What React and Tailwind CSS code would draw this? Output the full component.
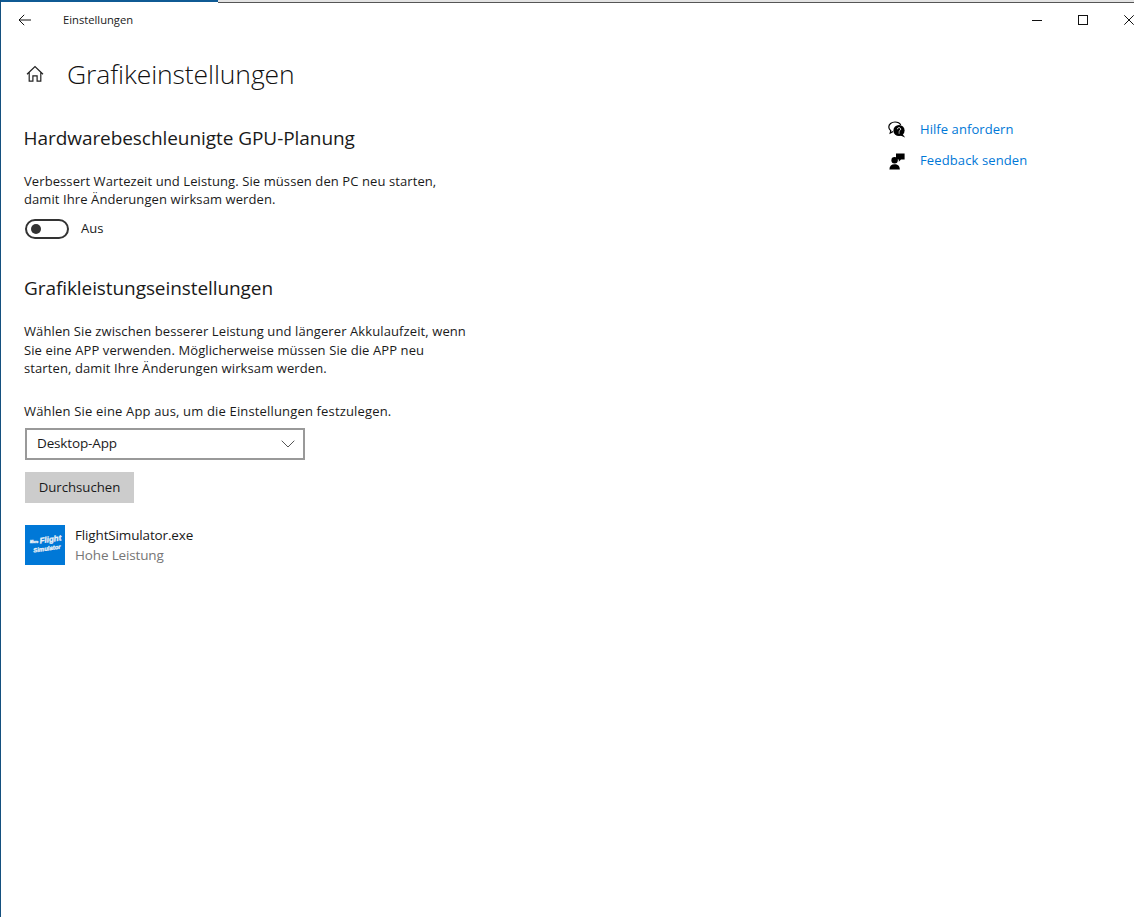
import React from "react";

function Back() {
  return (
    <svg width="14" height="12" viewBox="0 0 14 12" fill="none" stroke="#111" strokeWidth="1">
      <path d="M13 6H1M6.2 .8L1 6l5.2 5.2" />
    </svg>
  );
}

function Home() {
  return (
    <svg width="18" height="18" viewBox="0 0 18 18" fill="none" stroke="#222" strokeWidth="1.2">
      <path d="M1 9.2L9 1.6l8 7.6M3.2 7.4v8.8h3.7v-5.4h4.2v5.4h3.7V7.4" />
    </svg>
  );
}

function Help() {
  return (
    <svg width="18" height="18" viewBox="0 0 18 18">
      <path d="M7 1C3.4 1 .8 3.2.8 6c0 1.5.8 2.8 2 3.7L2.2 12l3-1.5" fill="none" stroke="#000" strokeWidth="1.2" />
      <path d="M7 1c2.6 0 4.8 1.2 5.7 3" fill="none" stroke="#000" strokeWidth="1.2" />
      <circle cx="11" cy="9.5" r="5.6" fill="#000" />
      <path d="M14.5 13l2.6 3.6-4.6-2z" fill="#000" />
      <path d="M9.4 8.2c0-2 3.3-2 3.3 0 0 1.2-1.6 1.2-1.6 2.4" fill="none" stroke="#fff" strokeWidth="1" />
      <rect x="10.6" y="11.4" width="1" height="1.1" fill="#fff" />
    </svg>
  );
}

function Feedback() {
  return (
    <svg width="16" height="17" viewBox="0 0 16 17" fill="#000">
      <circle cx="5.6" cy="7.2" r="3.2" />
      <path d="M.4 16.4c0-3.4 2-5.2 5.2-5.2s5.2 1.8 5.2 5.2z" />
      <path d="M7 .6h8.6v6H12l-2.2 2.2V6.6H7z" />
    </svg>
  );
}

function Chevron() {
  return (
    <svg width="14" height="8" viewBox="0 0 14 8" fill="none" stroke="#555" strokeWidth="1">
      <path d="M.7.7L7 7l6.3-6.3" />
    </svg>
  );
}

function AppIcon() {
  return (
    <div className="w-10 h-10 bg-[#0078d7] flex items-center justify-center shrink-0">
      <svg width="40" height="40" viewBox="0 0 40 40" fontFamily="'Liberation Sans',sans-serif" fontStyle="italic" fontWeight="700" fill="#eef2f6" stroke="#eef2f6" strokeWidth="0.3">
        <text x="5" y="18" fontSize="3">Micro</text>
        <text x="0" y="0" fontSize="8" transform="translate(15 18.5) rotate(-8)">Flight</text>
        <text x="0" y="0" fontSize="6" transform="translate(8.5 27.5) rotate(-8)">Simulator</text>
      </svg>
    </div>
  );
}

export default function App() {
  return (
    <div className="w-[1134px] h-[917px] bg-white text-[#1a1a1a] overflow-hidden flex flex-col font-['Open_Sans','Noto_Sans',sans-serif] border-l border-[#14507f]">
      <div className="h-[3px] flex shrink-0">
        <div className="w-[217px] h-[2px] bg-[#0f5a94]" />
        <div className="flex-1 bg-[#e3e3e3] border-b border-[#555]" />
      </div>
      <div className="h-[34px] flex items-center shrink-0">
        <div className="ml-[17px] w-[45px] flex"><Back /></div>
        <span className="text-[11.2px]">Einstellungen</span>
        <div className="ml-auto flex items-center">
          <div className="w-[10px] h-[1px] bg-[#111] mr-[36px]" />
          <div className="w-[10px] h-[10px] border border-[#111] mr-[36px]" />
          <svg width="10" height="10" viewBox="0 0 10 10" stroke="#111" strokeWidth="1">
            <path d="M.3.3l9.4 9.4M9.7.3L.3 9.7" />
          </svg>
        </div>
      </div>
      <div className="flex flex-1">
        <div className="w-[480px] pl-[23px] flex flex-col">
          <div className="flex items-center h-[42px] mt-[16px]">
            <span className="ml-[2px] flex"><Home /></span>
            <h1 className="ml-[23px] text-[26.5px] leading-[42px] tracking-[-0.1px] font-light text-[#111]">Grafikeinstellungen</h1>
          </div>
          <h2 className="mt-[29px] -ml-[0.5px] text-[19px] leading-[28px] tracking-[-0.06px] font-normal">Hardwarebeschleunigte GPU-Planung</h2>
          <p className="mt-[21px] text-[13px] leading-[17.5px] tracking-[0.09px]">Verbessert Wartezeit und Leistung. Sie müssen den PC neu starten,<br />damit Ihre Änderungen wirksam werden.</p>
          <div className="flex items-center mt-[11px] h-[20px]">
            <div className="ml-[1px] w-[44px] h-[20px] rounded-full border-2 border-[#333] flex items-center pl-[4px]">
              <div className="w-[10px] h-[10px] rounded-full bg-[#333]" />
            </div>
            <span className="ml-[12px] text-[13px]">Aus</span>
          </div>
          <h2 className="mt-[35px] text-[19px] leading-[28px] tracking-[-0.08px] font-normal">Grafikleistungseinstellungen</h2>
          <div className="mt-[20px] text-[13px] leading-[18.5px] tracking-[0.1px] whitespace-nowrap">
            <p>Wählen Sie zwischen besserer Leistung und längerer Akkulaufzeit, wenn</p>
            <p>Sie eine APP verwenden. Möglicherweise müssen Sie die APP neu</p>
            <p>starten, damit Ihre Änderungen wirksam werden.</p>
          </div>
          <p className="mt-[23px] text-[13px] leading-[20px] tracking-[0.16px]">Wählen Sie eine App aus, um die Einstellungen festzulegen.</p>
          <div className="mt-[7px] ml-[1px] w-[280px] h-[32px] border-2 border-[#999] flex items-center justify-between pl-[10px] pr-[8px]">
            <span className="text-[13.5px] tracking-[-0.15px]">Desktop-App</span>
            <Chevron />
          </div>
          <button className="mt-[12px] ml-[1px] w-[109px] h-[31px] bg-[#cccccc] text-[13.2px] text-[#1a1a1a] flex items-center justify-center pt-[2px]">Durchsuchen</button>
          <div className="mt-[22px] ml-[1px] flex items-center gap-[10px]">
            <AppIcon />
            <div className="flex flex-col">
              <span className="text-[13.5px] leading-[20px] tracking-[-0.15px]">FlightSimulator.exe</span>
              <span className="text-[13.5px] leading-[20px] text-[#767676] tracking-[-0.15px]">Hohe Leistung</span>
            </div>
          </div>
        </div>
        <div className="ml-[407px] mt-[83px] flex flex-col gap-[11px]">
          <div className="flex items-center gap-[14px] h-[20px]"><Help /><span className="text-[13px] text-[#0078d7] tracking-[0.07px]">Hilfe anfordern</span></div>
          <div className="flex items-center gap-[15px] h-[20px]"><span className="ml-[1px] flex"><Feedback /></span><span className="text-[13px] text-[#0078d7] tracking-[0.12px]">Feedback senden</span></div>
        </div>
      </div>
    </div>
  );
}
